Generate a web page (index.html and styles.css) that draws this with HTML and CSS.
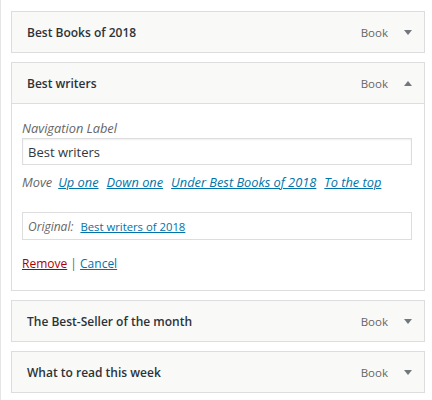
FILE: index.html
```html
<!DOCTYPE html>
<html lang="en">
<head>
<meta charset="utf-8">
<title>Menu items</title>
<link rel="stylesheet" href="styles.css">
</head>
<body>
<div class="page">
  <div class="item">
    <div class="handle">
      <span class="title">Best Books of 2018</span>
      <span class="type">Book</span>
      <svg class="arrow" width="8" height="5" viewBox="0 0 8 5"><polygon points="0,0 8,0 4,5"/></svg>
    </div>
  </div>

  <div class="item open">
    <div class="handle">
      <span class="title">Best writers</span>
      <span class="type">Book</span>
      <svg class="arrow" width="8" height="5" viewBox="0 0 8 5"><polygon points="0,5 8,5 4,0"/></svg>
    </div>
    <div class="settings">
      <label class="label" for="nav-label">Navigation Label</label>
      <input class="field" id="nav-label" type="text" value="Best writers">
      <div class="move">
        <span class="move-label">Move</span>
        <a href="#" class="link">Up one</a>
        <a href="#" class="link">Down one</a>
        <a href="#" class="link">Under Best Books of 2018</a>
        <a href="#" class="link">To the top</a>
      </div>
      <div class="original">
        <span class="orig-label">Original:</span>
        <a href="#" class="orig-link">Best writers of 2018</a>
      </div>
      <div class="actions">
        <a href="#" class="remove">Remove</a><span class="sep"> | </span><a href="#" class="cancel">Cancel</a>
      </div>
    </div>
  </div>

  <div class="item">
    <div class="handle">
      <span class="title">The Best-Seller of the month</span>
      <span class="type">Book</span>
      <svg class="arrow" width="8" height="5" viewBox="0 0 8 5"><polygon points="0,0 8,0 4,5"/></svg>
    </div>
  </div>

  <div class="item">
    <div class="handle">
      <span class="title">What to read this week</span>
      <span class="type">Book</span>
      <svg class="arrow" width="8" height="5" viewBox="0 0 8 5"><polygon points="0,0 8,0 4,5"/></svg>
    </div>
  </div>
</div>
</body>
</html>
```
FILE: styles.css
```css
html, body {
  margin: 0;
  padding: 0;
  background: #ffffff;
}

body {
  font-family: "Open Sans", "Noto Sans", sans-serif;
  font-size: 12px;
  color: #23282d;
}

.page {
  box-sizing: border-box;
  min-height: 100vh;
  border-left: 1px solid #e5e5e5;
  padding: 11px 7px 0 10px;
  display: flex;
  flex-direction: column;
  gap: 9px;
}

.item {
  display: flex;
  flex-direction: column;
}

.handle {
  box-sizing: border-box;
  height: 42px;
  display: flex;
  align-items: center;
  padding: 0 12px 0 15px;
  background: #f9f9f8;
  border: 1px solid #dddddd;
}

.title {
  flex: 1;
  font-weight: 600;
  font-size: 12px;
  color: #2c3338;
}

.type {
  color: #666666;
  font-size: 11.5px;
}

.arrow {
  margin-left: 16px;
  fill: #72777c;
  display: block;
}

.settings {
  border: 1px solid #dddddd;
  border-top: none;
  padding: 15px 12px 17px 10px;
  display: flex;
  flex-direction: column;
  background: #ffffff;
}

.label {
  font-style: italic;
  color: #666666;
  line-height: 19px;
  font-size: 12.8px;
}

.field {
  box-sizing: border-box;
  height: 27px;
  width: 100%;
  margin: 0;
  border: 1px solid #dddddd;
  box-shadow: inset 0 1px 2px rgba(0, 0, 0, 0.07);
  padding: 0 5px;
  font-family: "Open Sans", "Noto Sans", sans-serif;
  font-size: 13px;
  color: #32373c;
  outline: none;
}

.move {
  margin-top: 8px;
  line-height: 19px;
  font-size: 12.8px;
  display: flex;
  gap: 8px;
  font-style: italic;
}

.move-label {
  color: #666666;
  margin-right: -2px;
}

.link {
  color: #0073aa;
  text-decoration: underline;
}

.original {
  box-sizing: border-box;
  margin-top: 20px;
  height: 28px;
  border: 1px solid #dddddd;
  padding: 0 5px;
  display: flex;
  align-items: center;
  gap: 7px;
}

.orig-label {
  font-style: italic;
  color: #666666;
}

.orig-link {
  color: #0073aa;
  font-size: 11.3px;
  text-decoration: underline;
}

.actions {
  margin-top: 14px;
  line-height: 19px;
}

.remove {
  color: #aa0000;
  text-decoration: underline;
}

.sep {
  color: #666666;
  white-space: pre;
}

.cancel {
  color: #0073aa;
  text-decoration: underline;
}
```
